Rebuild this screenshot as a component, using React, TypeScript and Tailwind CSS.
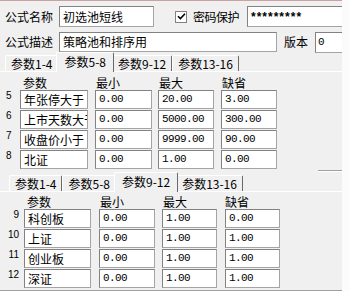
import React from "react";

// Classic Win32 formula-editor dialog, two stacked parameter tab panels.

const CJK = "font-['Noto_Sans_CJK_SC',sans-serif]";
const MONO = "font-['Liberation_Mono',monospace]";

function Box({ className = "", mono = false, children }: { className?: string; mono?: boolean; children?: React.ReactNode }) {
  return (
    <div
      className={`h-[19px] flex items-center overflow-hidden whitespace-nowrap bg-white border border-[#a4a4a4] border-t-[#828282] border-l-[#828282] pl-[3px] ${
        mono ? `${MONO} text-[11px] tracking-[-0.6px]` : `${CJK} text-[12px]`
      } ${className}`}
    >
      {children}
    </div>
  );
}

function Tabs({ active, className = "" }: { active: number; className?: string }) {
  const items = ["参数1-4", "参数5-8", "参数9-12", "参数13-16"];
  return (
    <div className={`flex items-end h-[19px] ${className}`}>
      {items.map((t, i) =>
        i === active ? (
          <div
            key={t}
            className="relative z-10 -mx-[2px] -mb-px h-[20px] px-[7px] pt-[1px] bg-[#f0f0f0] border-t border-l border-white border-r border-r-[#696969] rounded-t-[2px] text-[12px] leading-[16px]"
          >
            {t}
          </div>
        ) : (
          <div
            key={t}
            className="h-[16px] px-[5px] border-t border-l border-white border-r border-r-[#696969] rounded-t-[2px] text-[12px] leading-[15px]"
          >
            {t}
          </div>
        )
      )}
    </div>
  );
}

type Row = { n: number; name: string; min: string; max: string; def: string };

const rowsA: Row[] = [
  { n: 5, name: "年张停大于", min: "0.00", max: "20.00", def: "3.00" },
  { n: 6, name: "上市天数大于", min: "0.00", max: "5000.00", def: "300.00" },
  { n: 7, name: "收盘价小于", min: "0.00", max: "9999.00", def: "90.00" },
  { n: 8, name: "北证", min: "0.00", max: "1.00", def: "0.00" },
];

const rowsB: Row[] = [
  { n: 9, name: "科创板", min: "0.00", max: "1.00", def: "0.00" },
  { n: 10, name: "上证", min: "0.00", max: "1.00", def: "1.00" },
  { n: 11, name: "创业板", min: "0.00", max: "1.00", def: "1.00" },
  { n: 12, name: "深证", min: "0.00", max: "1.00", def: "1.00" },
];

export default function App() {
  return (
    <div className={`w-[349px] h-[291px] overflow-hidden bg-[#f0f0f0] text-black flex ${CJK}`}>
      <div className="w-[342px] flex flex-col">
        <div className="h-px bg-[#c9a3a3]" />

        {/* name / password */}
        <div className="mt-[5px] h-[21px] flex items-center text-[12px]">
          <div className="w-[59px] pl-[5px]">公式名称</div>
          <Box className="w-[95px] h-[21px]">初选池短线</Box>
          <div className="ml-[21px] w-[12px] h-[12px] bg-white border border-[#828282] flex items-center justify-center">
            <svg width="9" height="9" viewBox="0 0 9 9">
              <path d="M1 4.2 L3.4 6.6 L8 1.8" fill="none" stroke="#000" strokeWidth="1.6" />
            </svg>
          </div>
          <div className="ml-[6px] tracking-[-0.5px]">密码保护</div>
          <div className="ml-[8px] flex-1 h-[21px] bg-white border border-r-0 border-[#a4a4a4] border-t-[#828282] border-l-[#828282] pl-[3px] flex items-center font-['Liberation_Sans',sans-serif] font-bold text-[12px] tracking-[1px]">
            *********
          </div>
        </div>

        {/* description / version */}
        <div className="mt-[4px] h-[21px] flex items-center text-[12px]">
          <div className="w-[59px] pl-[5px]">公式描述</div>
          <Box className="w-[218px] h-[20px]">策略池和排序用</Box>
          <div className="ml-[7px] w-[31px]">版本</div>
          <div className={`flex-1 h-[21px] mt-[2px] bg-white border border-r-0 border-[#a4a4a4] border-t-[#828282] border-l-[#828282] pl-[2px] flex items-center ${MONO} text-[11px]`}>
            0
          </div>
        </div>

        {/* panel 1 */}
        <Tabs active={1} className="pl-[5px]" />
        <div className="border-t border-white">
          <div className="h-[18px] flex items-end pb-[1px] text-[12px] leading-none">
            <div className="w-[20px]" />
            <div className="w-[75px] pl-[3px]">参数</div>
            <div className="w-[63px] pl-[1px]">最小</div>
            <div className="w-[63px] pl-[1px]">最大</div>
            <div className="pl-[1px]">缺省</div>
          </div>
          {rowsA.map((r) => (
            <div key={r.n} className="h-[20px] flex items-start">
              <div className="w-[20px] pl-[6px] pt-[1px] font-['Liberation_Sans',sans-serif] text-[10px] leading-none">{r.n}</div>
              <Box className="w-[68px]">{r.name}</Box>
              <Box mono className="ml-[7px] w-[57px]">{r.min}</Box>
              <Box mono className="ml-[6px] w-[56px]">{r.max}</Box>
              <Box mono className="ml-[7px] w-[56px]">{r.def}</Box>
            </div>
          ))}
          <div className="ml-[318px] h-[2px] border-t border-[#a0a0a0] border-b border-b-white" />
        </div>

        {/* panel 2 */}
        <Tabs active={2} className="pl-[9px]" />
        <div className="flex-1 flex flex-col border-t border-white">
          <div className="h-[17px] flex items-end pb-[1px] text-[12px] leading-none">
            <div className="w-[24px]" />
            <div className="w-[75px] pl-[3px]">参数</div>
            <div className="w-[63px] pl-[1px]">最小</div>
            <div className="w-[62px] pl-[1px]">最大</div>
            <div className="pl-[1px]">缺省</div>
          </div>
          {rowsB.map((r) => (
            <div key={r.n} className="h-[20px] flex items-start">
              <div className="w-[24px] pr-[5px] pt-[1px] text-right font-['Liberation_Sans',sans-serif] text-[10px] leading-none">{r.n}</div>
              <Box className="w-[67px]">{r.name}</Box>
              <Box mono className="ml-[8px] w-[56px]">{r.min}</Box>
              <Box mono className="ml-[7px] w-[55px]">{r.max}</Box>
              <Box mono className="ml-[8px] w-[55px]">{r.def}</Box>
            </div>
          ))}
          <div className="mt-auto h-px bg-[#a0a0a0]" />
        </div>
      </div>
      <div className="flex-1 bg-[#fbfbfb]" />
    </div>
  );
}
